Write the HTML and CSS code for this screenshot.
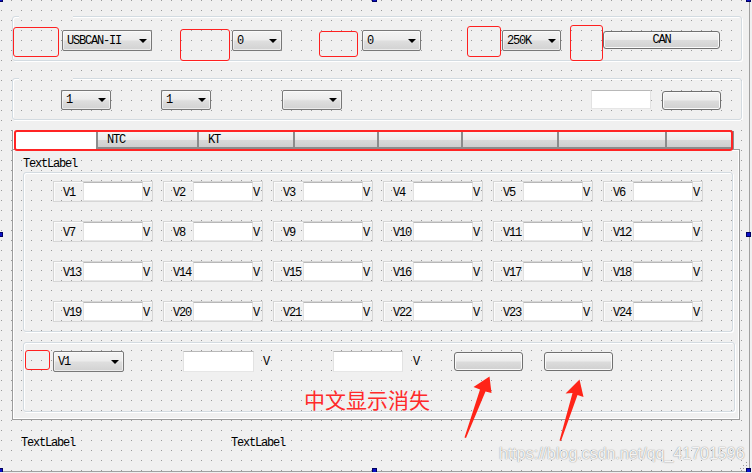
FILE: index.html
```html
<!DOCTYPE html>
<html lang="zh">
<head>
<meta charset="utf-8">
<title>Form</title>
<link rel="stylesheet" href="styles.css">
</head>
<body>
<div class="form">
  <div class="group titled g1">
    <div class="red r1"></div>
    <div class="combo c1">USBCAN-II</div>
    <div class="red r2"></div>
    <div class="combo c2">0</div>
    <div class="red r3"></div>
    <div class="combo c3">0</div>
    <div class="red r4"></div>
    <div class="combo c4">250K</div>
    <div class="red r5"></div>
    <div class="btn b-can">CAN</div>
  </div>

  <div class="group titled g2">
    <div class="combo ca">1</div>
    <div class="combo cb">1</div>
    <div class="combo cc"></div>
    <div class="edit ea"></div>
    <div class="btn bb"></div>
  </div>

  <div class="tabwidget">
    <div class="tabbar">
      <div class="tab sel t0"></div>
      <div class="tab t1">NTC</div>
      <div class="tab t2">KT</div>
      <div class="tab t3"></div>
      <div class="tab t4"></div>
      <div class="tab t5"></div>
      <div class="tab t6"></div>
      <div class="tab t7 last"></div>
    </div>
    <div class="pane">
      <div class="label pane-label">TextLabel</div>
      <div class="group vgrid">
        <div class="cell"><span class="lbl">V1</span><span class="edit"></span><span class="unit">V</span></div>
        <div class="cell"><span class="lbl">V2</span><span class="edit"></span><span class="unit">V</span></div>
        <div class="cell"><span class="lbl">V3</span><span class="edit"></span><span class="unit">V</span></div>
        <div class="cell"><span class="lbl">V4</span><span class="edit"></span><span class="unit">V</span></div>
        <div class="cell"><span class="lbl">V5</span><span class="edit"></span><span class="unit">V</span></div>
        <div class="cell"><span class="lbl">V6</span><span class="edit"></span><span class="unit">V</span></div>
        <div class="cell"><span class="lbl">V7</span><span class="edit"></span><span class="unit">V</span></div>
        <div class="cell"><span class="lbl">V8</span><span class="edit"></span><span class="unit">V</span></div>
        <div class="cell"><span class="lbl">V9</span><span class="edit"></span><span class="unit">V</span></div>
        <div class="cell"><span class="lbl">V10</span><span class="edit"></span><span class="unit">V</span></div>
        <div class="cell"><span class="lbl">V11</span><span class="edit"></span><span class="unit">V</span></div>
        <div class="cell"><span class="lbl">V12</span><span class="edit"></span><span class="unit">V</span></div>
        <div class="cell"><span class="lbl">V13</span><span class="edit"></span><span class="unit">V</span></div>
        <div class="cell"><span class="lbl">V14</span><span class="edit"></span><span class="unit">V</span></div>
        <div class="cell"><span class="lbl">V15</span><span class="edit"></span><span class="unit">V</span></div>
        <div class="cell"><span class="lbl">V16</span><span class="edit"></span><span class="unit">V</span></div>
        <div class="cell"><span class="lbl">V17</span><span class="edit"></span><span class="unit">V</span></div>
        <div class="cell"><span class="lbl">V18</span><span class="edit"></span><span class="unit">V</span></div>
        <div class="cell"><span class="lbl">V19</span><span class="edit"></span><span class="unit">V</span></div>
        <div class="cell"><span class="lbl">V20</span><span class="edit"></span><span class="unit">V</span></div>
        <div class="cell"><span class="lbl">V21</span><span class="edit"></span><span class="unit">V</span></div>
        <div class="cell"><span class="lbl">V22</span><span class="edit"></span><span class="unit">V</span></div>
        <div class="cell"><span class="lbl">V23</span><span class="edit"></span><span class="unit">V</span></div>
        <div class="cell"><span class="lbl">V24</span><span class="edit"></span><span class="unit">V</span></div>
      </div>
      <div class="group bgroup">
        <div class="brow">
          <div class="red rs"></div>
          <div class="combo cv">V1</div>
          <div class="edit e1"></div>
          <div class="unit u1">V</div>
          <div class="edit e2"></div>
          <div class="unit u2">V</div>
          <div class="btn bt1"></div>
          <div class="btn bt2"></div>
        </div>
        <div class="note">中文显示消失</div>
      </div>
    </div>
  </div>

  <div class="footer">
    <span class="label fl1">TextLabel</span>
    <span class="label fl2">TextLabel</span>
  </div>

  <svg class="arrows" width="752" height="473" viewBox="0 0 752 473" aria-hidden="true">
    <polygon points="489.5,376.5 491.5,393 485.5,391.5 466,438 464.5,437.5 480,389.5 473.5,387" fill="#ff2418"/>
    <polygon points="579.5,379.5 583.5,397 577.5,395 561,441 559.5,440.5 572.5,393 565.5,393.5" fill="#ff2418"/>
  </svg>

  <div class="watermark">https://blog.csdn.net/qq_41701596</div>

  <span class="grip"></span>

  <span class="handle h-tl"></span>
  <span class="handle h-tm"></span>
  <span class="handle h-tr"></span>
  <span class="handle h-ml"></span>
  <span class="handle h-mr"></span>
  <span class="handle h-bl"></span>
  <span class="handle h-bm"></span>
  <span class="handle h-br"></span>
</div>
</body>
</html>
```

FILE: styles.css
```css
*, *::before, *::after { box-sizing: border-box; margin: 0; padding: 0; }
html, body { background: #f0f0f0; }
body { margin: 0; overflow: hidden; }

.form {
  position: relative;
  width: 750px;
  height: 472px;
  border-right: 1px solid #a0a0a0;
  border-bottom: 1px solid #a0a0a0;
  background-color: #f0f0f0;
  background-image:
    linear-gradient(to bottom, transparent 1px, #f0f0f0 1px),
    linear-gradient(to right, #9a9a9a 1px, #f0f0f0 1px);
  background-size: 10px 10px;
  background-position: 1px 0;
  font-family: "Liberation Mono", monospace;
  font-size: 12px;
  letter-spacing: -1.2px;
  color: #000;
  display: flex;
  flex-direction: column;
  align-items: flex-start;
}

/* group boxes */
.group {
  position: relative;
  border: 1px solid #d3dbe1;
  border-radius: 3px;
  box-shadow: inset 1px 1px 0 #fff, 1px 1px 0 #fff;
}
.titled::before {
  content: "";
  position: absolute;
  left: 6px;
  top: -1px;
  width: 54px;
  height: 2px;
  background: #f0f0f0;
}
.g1, .g2 { display: flex; align-items: flex-start; margin-left: 12px; width: 730px; }
.g1 { margin-top: 16px; height: 45px; }
.g2 { margin-top: 17px; height: 42px; }

/* red outline widgets */
.red { border: 1px solid #ff2020; border-radius: 3px; flex: none; }
.r1 { margin-top: 10px; width: 46px; height: 30px; }
.r2 { margin: 12px 0 0 28px; width: 50px; height: 32px; }
.r3 { margin: 14px 0 0 37px; width: 39px; height: 26px; }
.r4 { margin: 9px 0 0 46px; width: 34px; height: 31px; }
.r5 { margin: 8px 0 0 9px; width: 33px; height: 36px; }

/* combo boxes */
.combo {
  position: relative;
  flex: none;
  height: 21px;
  border: 1px solid #787878;
  border-radius: 2px;
  background: linear-gradient(#f4f4f4, #ececec 45%, #dedede 55%, #d2d2d2);
  box-shadow: inset 0 0 0 1px rgba(255, 255, 255, 0.55);
  padding-left: 4px;
  line-height: 20px;
  white-space: nowrap;
}
.combo::after {
  content: "";
  position: absolute;
  right: 4px;
  top: 8px;
  width: 0;
  height: 0;
  border-left: 4px solid transparent;
  border-right: 4px solid transparent;
  border-top: 4px solid #000;
  box-sizing: content-box;
}
.c1 { margin: 13px 0 0 3px; width: 90px; }
.c2 { margin: 13px 0 0 2px; width: 50px; }
.c3 { margin: 13px 0 0 4px; width: 59px; }
.c4 { margin: 13px 0 0 1px; width: 59px; }
.g2 .combo { height: 20px; line-height: 19px; margin-top: 11px; }
.g2 .combo::after { top: 7px; }
.ca { margin-left: 48px; width: 50px; }
.cb { margin-left: 50px; width: 50px; }
.cc { margin-left: 71px; width: 60px; }

/* push buttons */
.btn {
  flex: none;
  border: 1px solid #707070;
  border-radius: 3px;
  background: linear-gradient(#f4f4f4, #ececec 48%, #dcdcdc 52%, #d0d0d0);
  box-shadow: inset 0 0 0 1px #fafafa;
  text-align: center;
}
.b-can { margin-top: 14px; width: 117px; height: 18px; line-height: 17px; }
.bb { margin: 12px 0 0 11px; width: 59px; height: 19px; }

/* line edits */
.edit {
  flex: none;
  display: block;
  background: #fff;
  border: 1px solid;
  border-color: #b8b8b8 #e2e2e2 #e6e6e6 #e2e2e2;
}
.ea { margin: 11px 0 0 249px; width: 60px; height: 19px; }

/* tab widget */
.tabwidget {
  margin: 10px 0 0 12px;
  width: 728px;
  border-left: 1px solid #9c9c9c;
  box-shadow: inset 1px 0 0 #fff;
}
.tabbar {
  position: relative;
  display: flex;
  height: 19px;
  padding: 1px 0 0 2px;
}
.tabbar::after {
  content: "";
  position: absolute;
  left: 1px;
  top: 0;
  width: 719px;
  height: 21px;
  border: 2px solid #ff2424;
  border-radius: 3px;
  z-index: 2;
}
.tab {
  flex: none;
  height: 18px;
  border-top: 1px solid #8c8c8c;
  border-left: 2px solid #8c8c8c;
  border-bottom: 2px solid #8c8c8c;
  background: linear-gradient(#f5f5f5, #ebebeb 50%, #d9d9d9 52%, #cfcfcf);
  padding-left: 9px;
  line-height: 17px;
}
.tab.last { border-right: 2px solid #8c8c8c; }
.tab.sel { background: #fff; border: none; height: 19px; position: relative; z-index: 1; }
.t0 { width: 81px; }
.t1 { width: 101px; }
.t2 { width: 96px; }
.t3 { width: 84px; }
.t4 { width: 84px; }
.t5 { width: 96px; }
.t6 { width: 108px; }
.t7 { width: 69px; }

.pane {
  width: 727px;
  height: 271px;
  border: 1px solid #9c9c9c;
  border-left: none;
  box-shadow: inset 0 1px 0 #fff, inset -1px -1px 0 #fff;
  display: flex;
  flex-direction: column;
  align-items: flex-start;
}
.label { line-height: 14px; white-space: nowrap; }
.pane-label { margin: 7px 0 0 10px; }

/* voltage grid */
.vgrid {
  margin: 1px 0 0 10px;
  width: 710px;
  height: 160px;
  padding: 8px 0 0 29px;
  display: grid;
  grid-template-columns: repeat(6, 100px);
  grid-auto-rows: 21px;
  column-gap: 10px;
  row-gap: 19px;
  align-content: start;
}
.cell {
  display: flex;
  height: 21px;
  border: 1px solid #d6d6d6;
  box-shadow: inset 1px 1px 0 #fbfbfb;
}
.cell .lbl { width: 29px; padding-left: 9px; line-height: 22px; }
.cell .edit { width: 60px; height: 19px; }
.cell .unit { width: 9px; line-height: 22px; }

/* bottom group */
.bgroup {
  margin: 10px 0 0 10px;
  width: 712px;
  height: 70px;
  display: flex;
  flex-direction: column;
}
.brow { display: flex; align-items: flex-start; }
.rs { margin: 7px 0 0 1px; width: 25px; height: 20px; }
.cv { margin: 8px 0 0 3px; width: 71px; }
.e1 { margin: 8px 0 0 59px; width: 71px; height: 21px; }
.unit { flex: none; }
.u1 { margin: 8px 0 0 9px; line-height: 22px; }
.e2 { margin: 8px 0 0 64px; width: 70px; height: 21px; }
.u2 { margin: 8px 0 0 10px; line-height: 22px; }
.bt1 { margin: 9px 0 0 35px; width: 69px; height: 19px; }
.bt2 { margin: 9px 0 0 21px; width: 69px; height: 19px; }
.note {
  margin: 16px 0 0 280px;
  font-family: "Noto Sans CJK SC", sans-serif;
  font-size: 21px;
  line-height: 21px;
  letter-spacing: 0;
  color: #ff2a2a;
  white-space: nowrap;
}

/* footer labels */
.footer { display: flex; margin-top: 16px; }
.fl1 { margin-left: 21px; }
.fl2 { margin-left: 156px; }

/* overlays */
.arrows { position: absolute; left: 0; top: 0; pointer-events: none; }
.watermark {
  position: absolute;
  left: 499px;
  top: 445px;
  font-family: "Liberation Sans", Arial, sans-serif;
  font-size: 16px;
  letter-spacing: 0;
  color: rgba(255, 255, 255, 0.92);
  text-shadow: 0 0 1px rgba(0, 0, 0, 0.45), 0 0 2px rgba(0, 0, 0, 0.12);
  white-space: nowrap;
}
.grip {
  position: absolute;
  right: 2px;
  bottom: 2px;
  width: 8px;
  height: 8px;
  background-image: radial-gradient(circle, #9a9a9a 0.8px, transparent 1px);
  background-size: 3px 3px;
  clip-path: polygon(100% 0, 100% 100%, 0 100%);
}
.handle {
  position: absolute;
  width: 5px;
  height: 5px;
  background: #0a10c8;
  border: 1px solid #000060;
}
.h-tl { left: -2px; top: -3px; }
.h-tm { left: 372px; top: -3px; }
.h-tr { left: 746px; top: -3px; }
.h-ml { left: -2px; top: 232px; }
.h-mr { left: 746px; top: 232px; }
.h-bl { left: -2px; top: 468px; }
.h-bm { left: 372px; top: 468px; }
.h-br { left: 746px; top: 468px; }
```
